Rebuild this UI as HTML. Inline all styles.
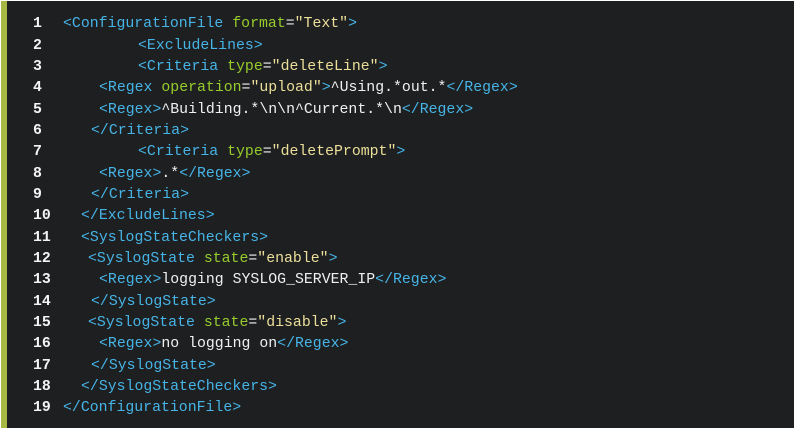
<!DOCTYPE html>
<html><head><meta charset="utf-8"><style>
html,body{margin:0;padding:0;background:#fff;width:797px;height:431px;overflow:hidden}
.box{position:absolute;left:1px;top:1px;width:793px;height:427px;background:#1e1f21}
.bar{position:absolute;left:1px;top:1px;width:6px;height:427px;background:#a8b845}
.l{position:absolute;height:21px;line-height:21px;font-family:"Liberation Mono","DejaVu Sans Mono",monospace;font-size:14.85px;color:#f0f0f0;white-space:pre;margin-top:2px}
.n{left:33px;font-weight:bold;color:#f4f4f4}
.t{color:#46b4e6}.a{color:#97cc2c}.s{color:#ecdf9a}.e{color:#e8e8e8}
</style></head><body>
<div class="box"></div><div class="bar"></div>
<div class="l n" style="top:12px">1</div><div class="l" style="top:12px;left:63px"><span class="t">&lt;ConfigurationFile</span> <span class="a">format</span><span class="e">=</span><span class="s">"Text"</span><span class="t">&gt;</span></div>
<div class="l n" style="top:34px">2</div><div class="l" style="top:34px;left:138px"><span class="t">&lt;ExcludeLines&gt;</span></div>
<div class="l n" style="top:55px">3</div><div class="l" style="top:55px;left:138px"><span class="t">&lt;Criteria</span> <span class="a">type</span>=<span class="s">"deleteLine"</span><span class="t">&gt;</span></div>
<div class="l n" style="top:76px">4</div><div class="l" style="top:76px;left:99px"><span class="t">&lt;Regex</span> <span class="a">operation</span>=<span class="s">"upload"</span><span class="t">&gt;</span>^Using.*out.*<span class="t">&lt;/Regex&gt;</span></div>
<div class="l n" style="top:98px">5</div><div class="l" style="top:98px;left:99px"><span class="t">&lt;Regex&gt;</span>^Building.*\n\n^Current.*\n<span class="t">&lt;/Regex&gt;</span></div>
<div class="l n" style="top:119px">6</div><div class="l" style="top:119px;left:91px"><span class="t">&lt;/Criteria&gt;</span></div>
<div class="l n" style="top:140px">7</div><div class="l" style="top:140px;left:138px"><span class="t">&lt;Criteria</span> <span class="a">type</span>=<span class="s">"deletePrompt"</span><span class="t">&gt;</span></div>
<div class="l n" style="top:162px">8</div><div class="l" style="top:162px;left:99px"><span class="t">&lt;Regex&gt;</span>.*<span class="t">&lt;/Regex&gt;</span></div>
<div class="l n" style="top:183px">9</div><div class="l" style="top:183px;left:91px"><span class="t">&lt;/Criteria&gt;</span></div>
<div class="l n" style="top:204px">10</div><div class="l" style="top:204px;left:81px"><span class="t">&lt;/ExcludeLines&gt;</span></div>
<div class="l n" style="top:226px">11</div><div class="l" style="top:226px;left:81px"><span class="t">&lt;SyslogStateCheckers&gt;</span></div>
<div class="l n" style="top:247px">12</div><div class="l" style="top:247px;left:88px"><span class="t">&lt;SyslogState</span> <span class="a">state</span>=<span class="s">"enable"</span><span class="t">&gt;</span></div>
<div class="l n" style="top:268px">13</div><div class="l" style="top:268px;left:99px"><span class="t">&lt;Regex&gt;</span>logging SYSLOG_SERVER_IP<span class="t">&lt;/Regex&gt;</span></div>
<div class="l n" style="top:290px">14</div><div class="l" style="top:290px;left:91px"><span class="t">&lt;/SyslogState&gt;</span></div>
<div class="l n" style="top:311px">15</div><div class="l" style="top:311px;left:88px"><span class="t">&lt;SyslogState</span> <span class="a">state</span>=<span class="s">"disable"</span><span class="t">&gt;</span></div>
<div class="l n" style="top:332px">16</div><div class="l" style="top:332px;left:99px"><span class="t">&lt;Regex&gt;</span>no logging on<span class="t">&lt;/Regex&gt;</span></div>
<div class="l n" style="top:354px">17</div><div class="l" style="top:354px;left:91px"><span class="t">&lt;/SyslogState&gt;</span></div>
<div class="l n" style="top:375px">18</div><div class="l" style="top:375px;left:81px"><span class="t">&lt;/SyslogStateCheckers&gt;</span></div>
<div class="l n" style="top:396px">19</div><div class="l" style="top:396px;left:63px"><span class="t">&lt;/ConfigurationFile&gt;</span></div>
</body></html>
